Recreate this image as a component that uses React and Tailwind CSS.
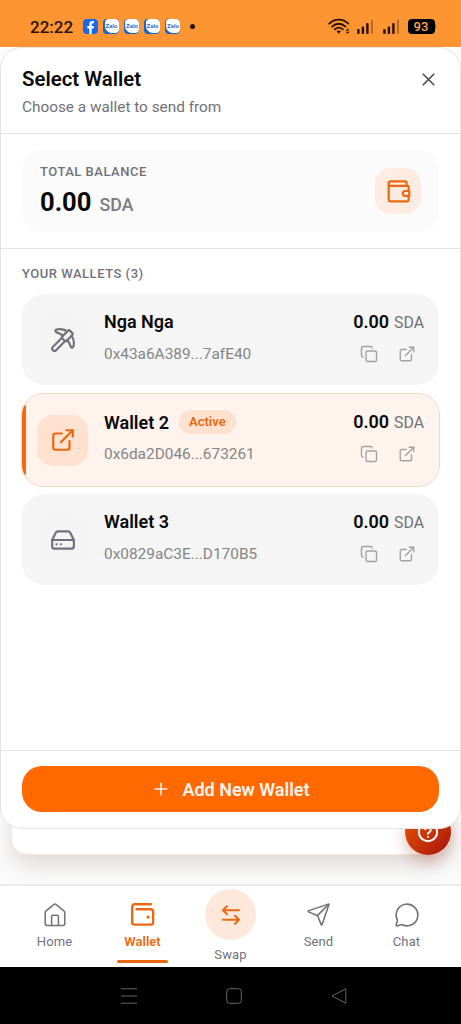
import { Plus, X, Copy, ExternalLink, Pickaxe, HardDrive, Send, MessageCircle } from 'lucide-react'

const wallets = [
  { name: 'Nga Nga', address: '0x43a6A389...7afE40', icon: Pickaxe },
  { name: 'Wallet 2', address: '0x6da2D046...673261', icon: ExternalLink, active: true },
  { name: 'Wallet 3', address: '0x0829aC3E...D170B5', icon: HardDrive },
]

const WifiIcon = () => (
  <svg width="23" height="17" viewBox="0 0 23 17" fill="none" stroke="#2b1000" strokeWidth="1.8" strokeLinecap="round">
    <path d="M1.2 5.6C6.6 0.2 14.9 0.2 20.3 5.6" />
    <path d="M4 8.6C8 4.8 13.5 4.8 17.5 8.6" />
    <path d="M6.8 11.3C9.2 9.2 12.3 9.2 14.7 11.3" />
    <path d="M8.6 13.2L10.75 15.8L12.9 13.2C11.6 12.3 9.9 12.3 8.6 13.2Z" fill="#2b1000" stroke="none" />
    <path d="M17.6 12.4L19.6 10.4L21.6 12.4ZM17.6 13.8L19.6 15.8L21.6 13.8Z" fill="#2b1000" stroke="none" />
  </svg>
)

const SignalIcon = () => (
  <svg width="17" height="16" viewBox="0 0 17 16" fill="#2b1000">
    <rect x="0.2" y="10" width="2.4" height="5" rx="0.8" />
    <rect x="4.7" y="7.6" width="2.4" height="7.4" rx="0.8" />
    <rect x="9.2" y="4" width="2.4" height="11" rx="0.8" />
    <rect x="14" y="0.5" width="2" height="14.5" rx="0.8" opacity="0.32" />
  </svg>
)

// Wallet with a clasp on the right edge
const WalletClaspIcon = () => (
  <svg width="24" height="24" viewBox="0 0 24 24" fill="none" stroke="#e8690f" strokeWidth="2.2" strokeLinecap="round" strokeLinejoin="round">
    <path d="M19.5 6.6V3.5a1.2 1.2 0 0 0-1.2-1.2H3.6A2 2 0 0 0 1.7 4.3V20.2a2.1 2.1 0 0 0 2.1 2.1H20.4a1.2 1.2 0 0 0 1.2-1.2V17.2" />
    <path d="M1.7 5.2A1.8 1.8 0 0 0 3.6 6.9H20.4a1.2 1.2 0 0 1 1.2 1.2V11.7" />
    <path d="M18.2 12H22.3V16.8H18.2A2.4 2.4 0 0 1 18.2 12Z" />
  </svg>
)

const HomeIcon = () => (
  <svg width="22" height="24" viewBox="0 0 22 24" fill="none" stroke="currentColor" strokeWidth="1.5" strokeLinecap="round" strokeLinejoin="round">
    <path d="M1.2 9.6a2.4 2.4 0 0 1 0.9-1.8L9.7 1.6a2 2 0 0 1 2.6 0L19.9 7.8a2.4 2.4 0 0 1 0.9 1.8V20.4a2 2 0 0 1-2 2H3.2a2 2 0 0 1-2-2Z" />
    <path d="M7.6 22.4V13.4a1.1 1.1 0 0 1 1.1-1.1H13.3a1.1 1.1 0 0 1 1.1 1.1V22.4" />
  </svg>
)

const WalletNavIcon = () => (
  <svg width="25" height="25" viewBox="0 0 24 24" fill="none" stroke="#e8690f" strokeWidth="2.3" strokeLinecap="round" strokeLinejoin="round">
    <path d="M20 2.2H4.4A2.3 2.3 0 0 0 2.1 4.5V19.4a2.3 2.3 0 0 0 2.3 2.3H19.9a2.3 2.3 0 0 0 2.3-2.3V9.3A2.3 2.3 0 0 0 19.9 7H6.4" />
    <circle cx="17.4" cy="14.5" r="1.5" fill="#e8690f" stroke="none" />
  </svg>
)

const SwapIcon = () => (
  <svg width="20" height="22" viewBox="0 0 20 22" fill="none" stroke="#e8690f" strokeWidth="2" strokeLinecap="round" strokeLinejoin="round">
    <path d="M18 6.2H2M6 2.2L2 6.2L6 10.2" />
    <path d="M2 15.7H18M14 11.7L18 15.7L14 19.7" />
  </svg>
)

const HelpIcon = () => (
  <svg width="22" height="22" viewBox="0 0 24 24" fill="none" stroke="#fff" strokeWidth="2.2" strokeLinecap="round" strokeLinejoin="round">
    <circle cx="12" cy="12" r="10" />
    <path d="M9.1 9a3 3 0 0 1 5.8 1c0 2-3 2.4-3 4" />
    <path d="M12 17.4h.01" />
  </svg>
)

const StatusBar = () => (
  <header className="flex h-[47px] shrink-0 items-center bg-[#fd9532] pt-[6px] pl-[30px] pr-[25px] text-[#2b1000]">
    <span className="w-[53px] text-[17px] font-medium leading-5">22:22</span>
    <div className="flex items-center gap-[5px]">
      <span className="flex size-[15px] items-center justify-center overflow-hidden rounded-[4px] bg-[#1668ef]">
        <svg width="15" height="15" viewBox="0 0 15 15" fill="#fff">
          <path d="M6.3 15V9.4H4.3V7H6.3V5.3C6.3 3.1 7.5 2 9.5 2H11.1V4.2H10C9.1 4.2 8.7 4.6 8.7 5.5V7H11L10.6 9.4H8.7V15Z" />
        </svg>
      </span>
      {[0, 1, 2, 3].map((n) => (
        <span key={n} className="flex size-[15.5px] justify-end overflow-hidden rounded-[4px] bg-[#1d64c8]">
          <span className="flex h-[14px] w-[14px] items-center justify-center rounded-[4px] rounded-bl-[7px] bg-white text-[6px] font-bold leading-none text-[#2a70c8]">
            Zalo
          </span>
        </span>
      ))}
    </div>
    <span className="ml-[10px] size-[5px] rounded-full bg-[#2b1000]" />
    <div className="ml-auto flex items-center">
      <WifiIcon />
      <span className="ml-[6px]"><SignalIcon /></span>
      <span className="ml-[9px]"><SignalIcon /></span>
      <span className="ml-[8px] flex h-[15px] w-[27px] items-center justify-center rounded-[4px] bg-black text-[13px] font-medium leading-none text-[#fda655]">
        93
      </span>
      <span className="h-[5px] w-[1.5px] rounded-r bg-[#9b5a1e]" />
    </div>
  </header>
)

const WalletCard = ({ wallet }) => {
  const Icon = wallet.icon
  return (
    <div
      className={
        wallet.active
          ? 'relative -mx-px -mt-px -mb-[2px] flex h-[94px] items-center overflow-hidden rounded-[22px] border border-[#f3d9c3] bg-[#fff4ed] px-[15px]'
          : 'flex h-[91px] items-center rounded-[22px] bg-[#f5f5f5] px-[15px]'
      }
    >
      {wallet.active && <span className="absolute left-0 top-[11px] bottom-[11px] w-[4px] rounded-r-[2px] bg-[#f56a0a]" />}
      <div
        className={
          wallet.active
            ? 'flex size-[51px] shrink-0 items-center justify-center rounded-2xl bg-[#fee1cf] text-[#e8690f]'
            : 'flex size-[51px] shrink-0 items-center justify-center rounded-2xl bg-[#f4f4f5] text-[#71717a]'
        }
      >
        <Icon size={26} strokeWidth={2} />
      </div>
      <div className="ml-4 flex-1 pb-[4px]">
        <div className="flex h-6 items-center">
          <span className="text-[18px] font-semibold text-[#0a0a0a]">{wallet.name}</span>
          {wallet.active && (
            <span className="ml-[10px] flex h-6 items-center rounded-full bg-[#fee1cf] px-[10px] text-[13px] font-semibold text-[#e8690f]">
              Active
            </span>
          )}
        </div>
        <p className="mt-[8px] text-[15.4px] leading-6 text-[#858585]">{wallet.address}</p>
      </div>
      <div className="flex flex-col items-end pb-[4px]">
        <div className="flex h-6 items-baseline gap-[5px] leading-6">
          <span className="text-[18px] font-semibold text-[#0a0a0a]">0.00</span>
          <span className="text-[15.8px] text-[#71717a]">SDA</span>
        </div>
        <div className="mt-[8px] flex h-6 items-center gap-5 pr-[8px] text-[#a3a0a3]">
          <Copy size={18} strokeWidth={1.8} />
          <ExternalLink size={18} strokeWidth={1.8} />
        </div>
      </div>
    </div>
  )
}

const SelectWalletSheet = () => (
  <section className="relative z-10 flex h-[782px] flex-col rounded-[22px] border border-[#e4e4e7] bg-white">
    {/* Title */}
    <div className="flex h-[86px] shrink-0 justify-between border-b border-[#e4e4e7] pl-[21px] pr-[21px] pt-[18px]">
      <div>
        <h1 className="text-[20.4px] font-semibold leading-[26px] text-[#0a0a0a]">Select Wallet</h1>
        <p className="mt-[3px] text-[15.35px] leading-6 text-[#71717a]">Choose a wallet to send from</p>
      </div>
      <X size={21} strokeWidth={2} className="mt-[3px] text-[#52525b]" />
    </div>

    {/* Total balance */}
    <div className="h-[115px] shrink-0 border-b border-[#e4e4e7] px-[21px] pt-4">
      <div className="flex h-[82px] items-center justify-between rounded-[20px] bg-[#fbfbfb] px-[18px]">
        <div>
          <p className="text-[13px] font-medium leading-5 tracking-[0.5px] text-[#71717a]">TOTAL BALANCE</p>
          <p className="mt-[4px] flex items-baseline gap-[8px] leading-8">
            <span className="text-[25.6px] font-bold text-[#0a0a0a]">0.00</span>
            <span className="text-[17.8px] font-medium text-[#7b7b82]">SDA</span>
          </p>
        </div>
        <div className="flex size-[46px] items-center justify-center rounded-2xl bg-[#feece3] pl-px">
          <WalletClaspIcon />
        </div>
      </div>
    </div>

    {/* Wallet list */}
    <div className="flex-1 px-[21px] pt-[15px]">
      <h2 className="text-[13px] font-medium leading-5 tracking-[0.52px] text-[#71717a]">YOUR WALLETS (3)</h2>
      <div className="mt-[10px] flex flex-col gap-[9px]">
        {wallets.map((wallet) => (
          <WalletCard key={wallet.name} wallet={wallet} />
        ))}
      </div>
    </div>

    <div className="h-[78px] shrink-0 border-t border-[#e4e4e7] px-[21px] pt-[15px]">
      <button className="flex h-[46px] w-full items-center justify-center gap-[11px] rounded-[20px] bg-[#ff6900] text-[18px] font-semibold text-[#fff4ed]">
        <Plus size={20} strokeWidth={1.9} />
        Add New Wallet
      </button>
    </div>
  </section>
)

const NavItem = ({ label, children }) => (
  <div className="flex w-[88px] flex-col items-center pt-[16px] text-[#71717a]">
    <div className="flex h-[25px] items-center">{children}</div>
    <span className="mt-[6px] text-[13px] leading-[18px] tracking-[0.1px]">{label}</span>
  </div>
)

const BottomNav = () => (
  <nav className="relative z-10 flex h-[83px] shrink-0 justify-center border-t-2 border-[#ebebed] bg-white">
    <NavItem label="Home">
      <HomeIcon />
    </NavItem>
    <div className="flex w-[88px] flex-col items-center pt-[16px] text-[#e8690f]">
      <div className="flex h-[25px] items-center"><WalletNavIcon /></div>
      <span className="mt-[6px] text-[13px] font-semibold leading-[18px]">Wallet</span>
      <span className="mt-[9px] h-[2.5px] w-[51px] rounded-full bg-[#e8690f]" />
    </div>
    <div className="flex w-[88px] flex-col items-center pt-[3px] text-[#71717a]">
      <div className="flex size-[51px] items-center justify-center rounded-full bg-[#fee8dc]">
        <SwapIcon />
      </div>
      <span className="mt-[6px] text-[13px] leading-[18px] tracking-[0.1px]">Swap</span>
    </div>
    <NavItem label="Send">
      <Send size={25} strokeWidth={1.5} />
    </NavItem>
    <NavItem label="Chat">
      <MessageCircle size={26} strokeWidth={1.5} />
    </NavItem>
  </nav>
)

const SystemBar = () => (
  <footer className="flex h-[57px] shrink-0 items-center justify-center gap-[89px] bg-black pl-[7px]">
    <svg width="16" height="16" viewBox="0 0 16 16" fill="none" stroke="#666" strokeWidth="1">
      <path d="M0 0.8H16M0 8H16M0 15.2H16" />
    </svg>
    <svg width="16" height="16" viewBox="0 0 16 16" fill="none" stroke="#666" strokeWidth="1">
      <rect x="0.7" y="0.7" width="14.6" height="14.6" rx="3" />
    </svg>
    <svg width="16" height="16" viewBox="0 0 16 16" fill="none" stroke="#666" strokeWidth="1" strokeLinejoin="round">
      <path d="M14.8 0.8V15.2L1 8Z" />
    </svg>
  </footer>
)

export default function App() {
  return (
    <div className="flex h-[1024px] w-full flex-col overflow-hidden bg-[#fcfcfc] font-['Roboto',sans-serif]">
      <StatusBar />
      <main className="relative h-[837px] shrink-0 overflow-hidden">
        <SelectWalletSheet />
        {/* Page card that shows below the sheet */}
        <div className="mx-3 -mt-8 h-[58px] rounded-b-[16px] border-b border-[#fbe6d6] bg-white shadow-[0_10px_24px_rgba(80,50,40,0.18)]" />
        <div className="absolute left-[405px] top-[762px] flex size-[46px] items-center justify-center rounded-full bg-linear-to-br from-[#ea580c] to-[#a80808] shadow-[0_6px_16px_rgba(160,40,20,0.3)]">
          <HelpIcon />
        </div>
      </main>
      <BottomNav />
      <SystemBar />
    </div>
  )
}
